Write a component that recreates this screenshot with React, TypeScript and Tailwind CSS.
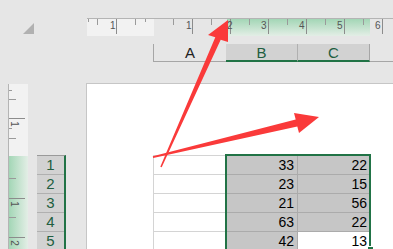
const topMajors = [116, 192, 230, 268, 306, 344, 382];
const topHalves = [97, 135, 173, 211, 249, 287, 325, 363];
const topQuarters = [88, 145];
const topLabels = [
  { x: 110, t: "1" },
  { x: 186, t: "1" },
  { x: 227, t: "2" },
  { x: 261, t: "3" },
  { x: 299, t: "4" },
  { x: 337, t: "5" },
  { x: 375, t: "6" },
];

const sideMajors = [118, 198, 237];
const sideHalves = [99, 138, 178, 217];
const sideQuarters = [90, 128];
const sideLabels = [
  { y: 119, t: "1" },
  { y: 199, t: "1" },
  { y: 238, t: "2" },
];

const rows = [
  [33, 22],
  [23, 15],
  [21, 56],
  [63, 22],
  [42, 13],
];

function TopRuler() {
  return (
    <div className="relative flex h-[18px] border-t border-[#b4b4b4]">
      <div className="w-[67px] bg-[#f2f2f2]" />
      <div className="w-[73px]" />
      <div className="w-[143px] bg-linear-to-b from-[#a3d6b6] to-[#e3eee6]" />
      <div className="flex-1" />
      <svg className="absolute left-0 top-0 h-[17px] w-[306px]" viewBox="0 0 306 17">
        {topMajors.map((x) => (
          <line key={"m" + x} x1={x - 86.5} x2={x - 86.5} y1={0} y2={15} stroke="#8c8c8c" />
        ))}
        {topHalves.map((x) => (
          <line key={"h" + x} x1={x - 86.5} x2={x - 86.5} y1={0} y2={6} stroke="#9a9a9a" />
        ))}
        {topQuarters.map((x) => (
          <line key={"q" + x} x1={x - 86.5} x2={x - 86.5} y1={0} y2={3} stroke="#9a9a9a" />
        ))}
      </svg>
      {topLabels.map((l) => (
        <span
          key={l.x}
          className="absolute top-[2px] text-[10px] leading-[10px] text-[#555]"
          style={{ left: l.x - 87 }}
        >
          {l.t}
        </span>
      ))}
    </div>
  );
}

function ColumnHeaders() {
  return (
    <div className="mt-[8px] flex h-[18px] text-[15px] leading-[17px]">
      <div className="w-[66px]" />
      <div className="w-[73px] border-b border-l border-[#a6a6a6] text-center text-[#222]">A</div>
      <div className="w-[72px] border-b-2 border-r border-b-[#217346] border-r-[#b0b0b0] bg-[#d2d2d2] text-center text-[#215e40]">
        B
      </div>
      <div className="w-[72px] border-b-2 border-r border-b-[#217346] border-r-[#a6a6a6] bg-[#d2d2d2] text-center text-[#215e40]">
        C
      </div>
      <div className="flex-1 border-b border-[#a6a6a6]" />
    </div>
  );
}

function SideRuler() {
  return (
    <div className="relative mt-[1px] flex w-[20px] flex-col border-l border-[#b4b4b4]">
      <div className="h-[72px] bg-[#f2f2f2]" />
      <div className="flex-1 bg-linear-to-r from-[#a3d6b6] to-[#e3eee6]" />
      <svg className="absolute left-0 top-0 h-[165px] w-[19px]" viewBox="0 0 19 165">
        {sideMajors.map((y) => (
          <line key={"m" + y} y1={y - 83.5} y2={y - 83.5} x1={0} x2={16} stroke="#8c8c8c" />
        ))}
        {sideHalves.map((y) => (
          <line key={"h" + y} y1={y - 83.5} y2={y - 83.5} x1={0} x2={7} stroke="#9a9a9a" />
        ))}
        {sideQuarters.map((y) => (
          <line key={"q" + y} y1={y - 83.5} y2={y - 83.5} x1={0} x2={3} stroke="#9a9a9a" />
        ))}
      </svg>
      {sideLabels.map((l) => (
        <span
          key={l.y}
          className="absolute left-[2px] rotate-90 text-[10px] leading-[10px] text-[#555]"
          style={{ top: l.y - 84 }}
        >
          {l.t}
        </span>
      ))}
    </div>
  );
}

function RowHeaders() {
  return (
    <div className="mt-[72px] w-[29px] self-start border-r-2 border-t border-r-[#217346] border-t-[#9a9a9a]">
      {rows.map((_, i) => (
        <div
          key={i}
          className="h-[19px] border-b border-[#b0b0b0] bg-[#d2d2d2] text-center text-[15px] leading-[18px] text-[#215e40]"
        >
          {i + 1}
        </div>
      ))}
    </div>
  );
}

function Sheet() {
  return (
    <div className="relative flex-1 border-l border-t border-[#c6c6c6] bg-white">
      <div className="ml-[66px] mt-[71px] w-[218px] border-l border-t border-[#d4d4d4] text-[14px] leading-[18px] text-black">
        {rows.map(([b, c], i) => (
          <div key={i} className="flex h-[19px]">
            <div className="w-[73px] border-b border-r border-[#d4d4d4]" />
            <div className="w-[71px] border-b border-r border-[#ababab] bg-[#c6c6c6] pr-[3px] text-right">{b}</div>
            {i === 4 ? (
              <div className="relative w-[73px] border-b border-r border-[#d4d4d4] bg-white pr-[3px] text-right">
                {c}
                <span className="absolute -bottom-[2px] -right-[3px] z-10 h-[6px] w-[6px] border-l border-t border-white bg-[#217346]" />
              </div>
            ) : (
              <div className="w-[73px] border-b border-r border-[#ababab] bg-[#c6c6c6] pr-[3px] text-right">{c}</div>
            )}
          </div>
        ))}
      </div>
      <div className="pointer-events-none absolute left-[138px] top-[70px] h-[120px] w-[146px] border-2 border-[#217346]" />
    </div>
  );
}

function Arrows() {
  return (
    <svg className="pointer-events-none absolute left-0 top-0 h-[249px] w-[393px]" viewBox="0 0 393 249">
      <polygon
        fill="#fa3a3a"
        points="160.3,166.7 215.3,37.3 208,35 228,20 228,42 220.7,39.7 161.7,167.3"
      />
      <polygon
        fill="#fa3a3a"
        points="152.8,156.3 295.7,119.6 294,113 319,117 299,133 297.3,126.4 153.2,157.9"
      />
    </svg>
  );
}

export default function App() {
  return (
    <div className="relative h-[249px] w-[393px] overflow-hidden bg-[#e6e6e6] font-['Liberation_Sans',Arial,sans-serif]">
      <div className="flex h-[83px]">
        <div className="w-[87px] pl-[23px] pt-[23px]">
          <div className="h-[11px] w-[11px] bg-[#b1b1b1] [clip-path:polygon(100%_0,100%_100%,0_100%)]" />
        </div>
        <div className="flex flex-1 flex-col pt-[18px]">
          <TopRuler />
          <ColumnHeaders />
        </div>
      </div>
      <div className="flex h-[166px]">
        <div className="w-[8px]" />
        <SideRuler />
        <div className="w-[9px]" />
        <RowHeaders />
        <div className="w-[20px]" />
        <Sheet />
      </div>
      <Arrows />
    </div>
  );
}
